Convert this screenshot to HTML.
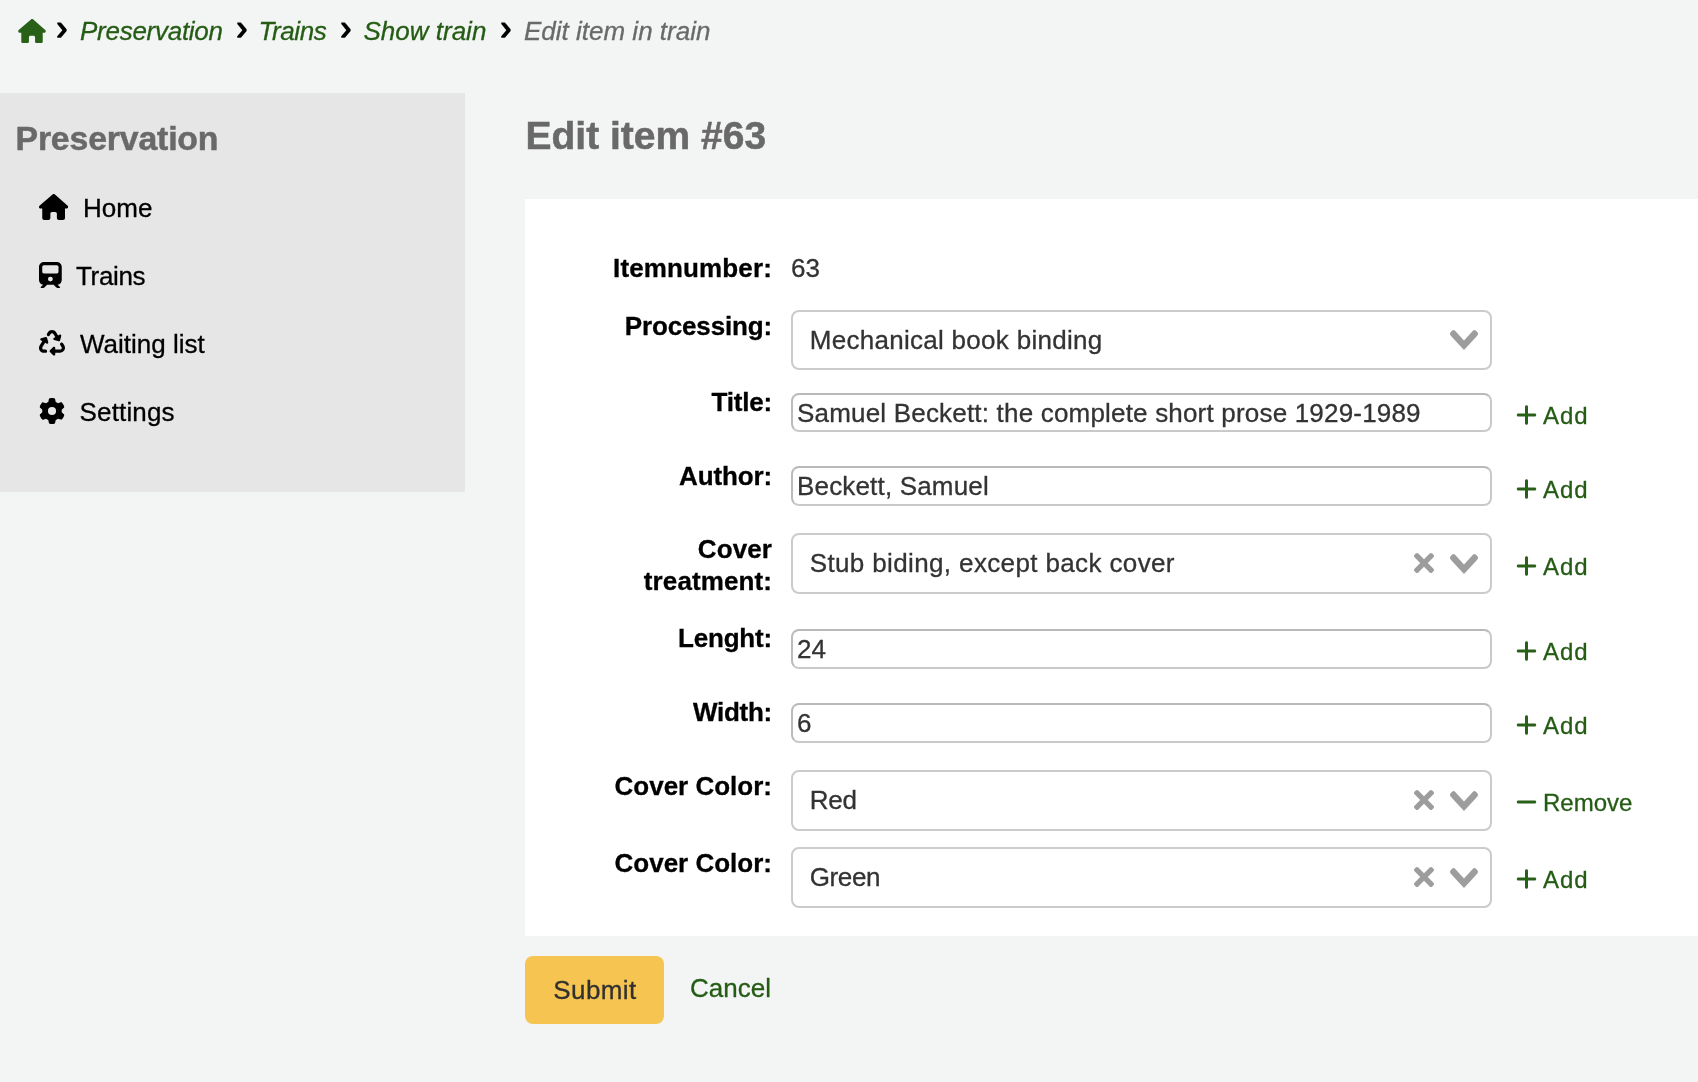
<!DOCTYPE html>
<html lang="en">
<head>
<meta charset="utf-8">
<title>Edit item in train › Preservation › Koha</title>
<style>
*{box-sizing:border-box;margin:0;padding:0}
html,body{width:1698px;height:1082px;overflow:hidden}
body{background:#f3f4f4;font-family:"Liberation Sans",sans-serif;font-size:26px;color:#000;position:relative;-webkit-text-stroke-width:.3px}
a{color:#245c14;text-decoration:none}
svg{display:block}
#page{position:absolute;left:0;top:0;width:1698px;height:1082px;will-change:transform}

/* breadcrumbs */
#breadcrumbs{position:absolute;left:0;top:0;width:1698px;height:64px}
#breadcrumbs ol{list-style:none;position:relative;height:64px}
#breadcrumbs li{position:absolute;top:15px;line-height:32px;font-size:26px;font-style:italic;white-space:nowrap;color:#696969}
#breadcrumbs li a{color:#245c14}
#breadcrumbs li+li::before{content:"\203a";position:absolute;left:var(--sx,-24px);top:-8px;font-style:normal;font-weight:normal;font-size:35px;line-height:40px;color:#000;-webkit-text-stroke:1.5px #000;transform:scaleX(.93)}
#breadcrumbs .homeicon{position:absolute;left:18px;top:18.5px;width:28px;height:24.5px}
#breadcrumbs .homeicon svg{width:28px;height:24.5px;fill:#286018}

/* sidebar */
#navmenu{position:absolute;left:0;top:93px;width:465px;height:399px;background:#e6e6e6}
#navmenu h5{-webkit-text-stroke-width:.5px;position:absolute;left:15.5px;top:117px;font-size:33.8px;letter-spacing:-.16px;line-height:40px;font-weight:bold;color:#696969;white-space:nowrap}
#navmenu ul{list-style:none}
#navmenu li{position:absolute;left:0;width:465px;height:68px}
#navmenu li a{color:#000;display:block;position:absolute;top:0;line-height:32px;font-size:26px;white-space:nowrap}
#navmenu li .ic{position:absolute;fill:#000}

/* main */
h2{position:absolute;left:525.5px;top:112.6px;-webkit-text-stroke-width:.5px;font-size:39px;line-height:46px;font-weight:bold;color:#696969;white-space:nowrap}
fieldset.rows{position:absolute;left:525px;top:199px;width:1173px;height:737px;background:#fff;border:0}
fieldset.rows ol{list-style:none}
fieldset.rows li{position:static}
fieldset.rows label{position:absolute;left:67px;width:180px;text-align:right;font-weight:bold;font-size:26px;line-height:32px;color:#000}
.txt{position:absolute;left:266px;width:701px;height:39px;border:2px solid;border-color:#b9b9b9 #c9c9c9 #c9c9c9 #bbb;border-radius:8px;background:#fff;font-size:26px;line-height:32px;color:#333;white-space:nowrap;overflow:hidden}
.txt span{position:absolute;left:4px;white-space:nowrap}
.vs{position:absolute;left:266px;width:701px;height:60px;border:2px solid #cbcbcb;border-radius:8px;background:#fff;font-size:26px;color:#333}
.vs .sel{position:absolute;left:16.7px;top:12.1px;line-height:32px;white-space:nowrap}
.vs .x{position:absolute;left:621px;top:19px;width:20px;height:20px;fill:rgba(60,60,60,.5)}
.vs .ch{position:absolute;left:657px;top:19px;width:28px;height:20px;fill:rgba(60,60,60,.5)}
.val{position:absolute;left:266px;font-size:26px;line-height:32px;color:#333}
.act{position:absolute;left:990.9px;font-size:24px;line-height:32px;color:#245c14;white-space:nowrap}
.act svg{position:absolute;left:0;top:3.2px;width:21px;height:24px;fill:#286018}
.act span{position:absolute;left:27.1px;top:0}
.act.rem svg{top:2.4px}

.action{position:absolute;left:525px;top:956px}
.action .btn{position:absolute;left:0;top:0;width:139px;height:68px;border:0;border-radius:8px;background:#f6c450;color:#303030;font-family:inherit;font-size:26px;line-height:68px;text-align:left;padding-left:28.3px;letter-spacing:.4px}
.action a{position:absolute;left:165px;top:16px;line-height:32px;font-size:26px}
</style>
</head>
<body>
<div id="page">

<nav id="breadcrumbs" aria-label="Breadcrumb">
<ol>
  <li style="left:0;top:0"><a href="#" class="homeicon" title="Home"><svg viewBox="0 0 576 512"><path d="M575.8 255.5c0 18-15 32.1-32 32.1h-32l.7 160.2c0 2.700-.2 5.400-.5 8.100V472c0 22.100-17.900 40-40 40H456c-1.100 0-2.200 0-3.300-.1c-1.400 .1-2.800 .1-4.200 .1H416 392c-22.100 0-40-17.900-40-40V448 384c0-17.700-14.300-32-32-32H256c-17.700 0-32 14.300-32 32v64 24c0 22.100-17.900 40-40 40H160 128.100c-1.500 0-3-.1-4.500-.2c-1.200 .1-2.400 .2-3.600 .2H104c-22.100 0-40-17.900-40-40V360c0-.9 0-1.900 .1-2.800V287.600H32c-18 0-32-14-32-32.100c0-9 3-17 10-24L266.400 8c7-7 15-8 22-8s15 2 21 7L564.800 231.500c8 7 12 15 11 24z"/></svg></a></li>
  <li style="left:80px;--sx:-24px"><a href="#" style="letter-spacing:-.27px">Preservation</a></li>
  <li style="left:258.5px;--sx:-22.5px"><a href="#" style="letter-spacing:-.4px">Trains</a></li>
  <li style="left:363.5px;--sx:-23.5px"><a href="#">Show train</a></li>
  <li style="left:524px;--sx:-24px">Edit item in train</li>
</ol>
</nav>

<aside id="navmenu">
  <h5 style="top:24.5px">Preservation</h5>
  <ul>
    <li style="top:81px">
      <svg class="ic" style="left:39px;top:20px;width:29.25px;height:26px" viewBox="0 0 576 512"><path d="M575.8 255.5c0 18-15 32.1-32 32.1h-32l.7 160.2c0 2.700-.2 5.400-.5 8.100V472c0 22.100-17.900 40-40 40H456c-1.100 0-2.200 0-3.300-.1c-1.400 .1-2.800 .1-4.200 .1H416 392c-22.100 0-40-17.900-40-40V448 384c0-17.700-14.300-32-32-32H256c-17.700 0-32 14.300-32 32v64 24c0 22.100-17.900 40-40 40H160 128.100c-1.500 0-3-.1-4.500-.2c-1.200 .1-2.400 .2-3.600 .2H104c-22.100 0-40-17.900-40-40V360c0-.9 0-1.900 .1-2.800V287.600H32c-18 0-32-14-32-32.100c0-9 3-17 10-24L266.400 8c7-7 15-8 22-8s15 2 21 7L564.800 231.500c8 7 12 15 11 24z"/></svg>
      <a href="#" style="left:83px;top:18px">Home</a>
    </li>
    <li style="top:149px">
      <svg class="ic" style="left:39px;top:20px;width:22.75px;height:26px" viewBox="0 0 448 512"><path d="M96 0C43 0 0 43 0 96V352c0 48 35.200 87.700 81.100 94.900l-46 46C28.100 499.900 33.100 512 43 512H82.700c8.500 0 16.600-3.400 22.600-9.400L160 448H288l54.600 54.600c6 6 14.100 9.400 22.600 9.400H405c10 0 15-12.100 7.900-19.100l-46-46c46-7.100 81.100-46.900 81.100-94.900V96c0-53-43-96-96-96H96zM64 96c0-17.700 14.300-32 32-32H352c17.700 0 32 14.300 32 32v96c0 17.700-14.300 32-32 32H96c-17.700 0-32-14.300-32-32V96zM224 288a48 48 0 1 1 0 96 48 48 0 1 1 0-96z"/></svg>
      <a href="#" style="left:76px;top:18px;letter-spacing:-.35px">Trains</a>
    </li>
    <li style="top:217px">
      <svg class="ic" style="left:39px;top:20px;width:26px;height:26px" viewBox="0 0 512 512"><path d="M174.700 45.100C192.200 17 223 0 256 0s63.800 17 81.300 45.100l38.600 61.700 27-15.600c8.400-4.900 18.900-4.200 26.600 1.700s11.100 15.900 8.600 25.300l-23.400 87.400c-3.400 12.800-16.600 20.400-29.400 17l-87.400-23.400c-9.400-2.500-16.300-10.400-17.600-20s3.400-19.100 11.800-23.900l28.400-16.400L283 79c-5.800-9.300-16-15-27-15s-21.200 5.700-27 15l-17.500 28c-9.200 14.800-28.600 19.500-43.600 10.500c-15.300-9.200-20.200-29.200-10.700-44.400l17.500-28zM429.500 251.900c15-9 34.400-4.300 43.600 10.500l24.400 39.100c9.400 15.100 14.400 32.400 14.600 50.200c.3 53.100-42.700 96.400-95.800 96.400L320 448v32c0 9.700-5.800 18.500-14.800 22.200s-19.300 1.700-26.200-5.200l-64-64c-9.400-9.400-9.400-24.600 0-33.900l64-64c6.900-6.900 17.200-8.900 26.200-5.200s14.800 12.500 14.800 22.200v32l96.200 0c17.600 0 31.900-14.400 31.800-32c0-5.900-1.700-11.700-4.800-16.700l-24.400-39.100c-9.500-15.200-4.700-35.200 10.700-44.400zm-364.600-31L36 204.200c-8.400-4.900-13.100-14.300-11.800-23.900s8.200-17.500 17.600-20l87.400-23.400c12.800-3.400 26 4.200 29.400 17L182 241.200c2.500 9.400-.9 19.300-8.600 25.300s-18.200 6.600-26.600 1.700l-26.500-15.300L68.800 335.300c-3.100 5-4.800 10.800-4.800 16.700c-.1 17.600 14.200 32 31.800 32l32.200 0c17.700 0 32 14.300 32 32s-14.300 32-32 32l-32.200 0C42.700 448-.3 404.800 0 351.600c.1-17.800 5.100-35.100 14.600-50.200l50.300-80.500z"/></svg>
      <a href="#" style="left:80px;top:18px">Waiting list</a>
    </li>
    <li style="top:285px">
      <svg class="ic" style="left:39px;top:20px;width:26px;height:26px" viewBox="0 0 512 512"><path d="M495.900 166.600c3.200 8.700 .5 18.400-6.400 24.600l-43.300 39.400c1.100 8.300 1.700 16.800 1.700 25.400s-.6 17.100-1.700 25.400l43.300 39.400c6.900 6.200 9.600 15.900 6.400 24.600c-4.400 11.900-9.700 23.300-15.800 34.300l-4.700 8.100c-6.600 11-14 21.400-22.100 31.200c-5.900 7.200-15.700 9.600-24.500 6.800l-55.700-17.700c-13.400 10.300-28.200 18.900-44 25.400l-12.500 57.100c-2 9.100-9 16.300-18.200 17.800c-13.800 2.300-28 3.500-42.500 3.500s-28.700-1.200-42.500-3.500c-9.200-1.500-16.200-8.700-18.200-17.800l-12.500-57.100c-15.800-6.500-30.600-15.100-44-25.400L83.100 425.900c-8.800 2.800-18.600 .3-24.500-6.800c-8.100-9.800-15.500-20.200-22.100-31.200l-4.700-8.100c-6.100-11-11.400-22.400-15.800-34.300c-3.200-8.700-.5-18.400 6.400-24.600l43.300-39.400C64.600 273.100 64 264.600 64 256s.6-17.100 1.700-25.400L22.400 191.200c-6.900-6.200-9.600-15.900-6.400-24.600c4.400-11.900 9.700-23.300 15.800-34.300l4.700-8.100c6.600-11 14-21.400 22.100-31.200c5.900-7.200 15.700-9.600 24.500-6.800l55.700 17.700c13.400-10.300 28.200-18.900 44-25.400l12.500-57.100c2-9.100 9-16.300 18.200-17.800C227.300 1.200 241.500 0 256 0s28.700 1.200 42.500 3.500c9.200 1.500 16.200 8.700 18.200 17.800l12.500 57.100c15.800 6.500 30.600 15.100 44 25.400l55.700-17.700c8.800-2.800 18.600-.3 24.500 6.800c8.100 9.800 15.500 20.200 22.100 31.200l4.700 8.100c6.100 11 11.400 22.400 15.800 34.300zM256 336a80 80 0 1 0 0-160 80 80 0 1 0 0 160z"/></svg>
      <a href="#" style="left:79.6px;top:18px;letter-spacing:.14px">Settings</a>
    </li>
  </ul>
</aside>

<main>
<h2>Edit item #63</h2>
<form>
<fieldset class="rows">
<ol>
  <li><label style="top:53.4px;letter-spacing:.13px">Itemnumber:</label><span class="val" style="top:53.4px;">63</span></li>
  <li><label style="top:111.4px;letter-spacing:-.15px">Processing:</label><div class="vs" style="top:111px;height:60px"><span class="sel" style="top:12.2px;letter-spacing:.29px">Mechanical book binding</span><svg class="ch" style="top:18.2px" viewBox="0 0 14 10"><path d="M9.211364 7.59931l4.48338-4.867229c.407008-.441854.407008-1.158247 0-1.60046l-.73712-.80023c-.407008-.441854-1.066904-.441854-1.474243 0L7 5.198617 2.51662.33139c-.407008-.441853-1.066904-.441853-1.474243 0l-.737121.80023c-.407008.441854-.407008 1.158248 0 1.600461l4.48338 4.867228L7 10l2.211364-2.40069z"/></svg></div></li>
  <li><label style="top:187.2px;letter-spacing:-.18px">Title:</label><div class="txt" style="top:194px;height:39px"><span style="top:2.4px;letter-spacing:.19px">Samuel Beckett: the complete short prose 1929-1989</span></div><a href="#" class="act" style="top:201px"><svg viewBox="0 0 448 512"><path d="M256 80c0-17.700-14.300-32-32-32s-32 14.300-32 32V224H48c-17.700 0-32 14.300-32 32s14.300 32 32 32H192V432c0 17.700 14.300 32 32 32s32-14.300 32-32V288H400c17.700 0 32-14.300 32-32s-14.300-32-32-32H256V80z"/></svg><span style="letter-spacing:1px;">Add</span></a></li>
  <li><label style="top:261.1px;letter-spacing:-.14px">Author:</label><div class="txt" style="top:267px;height:40px"><span style="top:2.3px;letter-spacing:.17px">Beckett, Samuel</span></div><a href="#" class="act" style="top:274.7px"><svg viewBox="0 0 448 512"><path d="M256 80c0-17.700-14.300-32-32-32s-32 14.300-32 32V224H48c-17.700 0-32 14.300-32 32s14.300 32 32 32H192V432c0 17.700 14.300 32 32 32s32-14.300 32-32V288H400c17.700 0 32-14.300 32-32s-14.300-32-32-32H256V80z"/></svg><span style="letter-spacing:1px;">Add</span></a></li>
  <li><label style="top:334.1px;letter-spacing:.1px">Cover treatment:</label><div class="vs" style="top:334px;height:61px"><span class="sel" style="top:11.6px;letter-spacing:.37px">Stub biding, except back cover</span><svg class="x" style="top:17.8px" viewBox="0 0 10 10"><path d="M6.895455 5l2.842897-2.842898c.348864-.348863.348864-.914488 0-1.263636L9.106534.261648c-.348864-.348864-.914489-.348864-1.263636 0L5 3.104545 2.157102.261648c-.348863-.348864-.914488-.348864-1.263636 0L.261648.893466c-.348864.348864-.348864.914489 0 1.263636L3.104545 5 .261648 7.842898c-.348864.348863-.348864.914488 0 1.263636l.631818.631818c.348864.348864.914773.348864 1.263636 0L5 6.895455l2.842898 2.842897c.348863.348864.914772.348864 1.263636 0l.631818-.631818c.348864-.348864.348864-.914489 0-1.263636L6.895455 5z"/></svg><svg class="ch" style="top:18.7px" viewBox="0 0 14 10"><path d="M9.211364 7.59931l4.48338-4.867229c.407008-.441854.407008-1.158247 0-1.60046l-.73712-.80023c-.407008-.441854-1.066904-.441854-1.474243 0L7 5.198617 2.51662.33139c-.407008-.441853-1.066904-.441853-1.474243 0l-.737121.80023c-.407008.441854-.407008 1.158248 0 1.600461l4.48338 4.867228L7 10l2.211364-2.40069z"/></svg></div><a href="#" class="act" style="top:352px"><svg viewBox="0 0 448 512"><path d="M256 80c0-17.700-14.300-32-32-32s-32 14.300-32 32V224H48c-17.700 0-32 14.300-32 32s14.300 32 32 32H192V432c0 17.700 14.300 32 32 32s32-14.300 32-32V288H400c17.700 0 32-14.300 32-32s-14.300-32-32-32H256V80z"/></svg><span style="letter-spacing:1px;">Add</span></a></li>
  <li><label style="top:423.4px;letter-spacing:-.19px">Lenght:</label><div class="txt" style="top:430px;height:40px"><span style="top:2.4px;">24</span></div><a href="#" class="act" style="top:436.9px"><svg viewBox="0 0 448 512"><path d="M256 80c0-17.700-14.300-32-32-32s-32 14.300-32 32V224H48c-17.700 0-32 14.300-32 32s14.300 32 32 32H192V432c0 17.700 14.300 32 32 32s32-14.300 32-32V288H400c17.700 0 32-14.300 32-32s-14.300-32-32-32H256V80z"/></svg><span style="letter-spacing:1px;">Add</span></a></li>
  <li><label style="top:497.1px;letter-spacing:-.25px">Width:</label><div class="txt" style="top:504px;height:40px"><span style="top:1.8px;">6</span></div><a href="#" class="act" style="top:510.6px"><svg viewBox="0 0 448 512"><path d="M256 80c0-17.700-14.300-32-32-32s-32 14.300-32 32V224H48c-17.700 0-32 14.300-32 32s14.300 32 32 32H192V432c0 17.700 14.300 32 32 32s32-14.300 32-32V288H400c17.700 0 32-14.300 32-32s-14.300-32-32-32H256V80z"/></svg><span style="letter-spacing:1px;">Add</span></a></li>
  <li><label style="top:570.9px;">Cover Color:</label><div class="vs" style="top:571px;height:61px"><span class="sel" style="top:12.4px;letter-spacing:-.2px">Red</span><svg class="x" style="top:17.8px" viewBox="0 0 10 10"><path d="M6.895455 5l2.842897-2.842898c.348864-.348863.348864-.914488 0-1.263636L9.106534.261648c-.348864-.348864-.914489-.348864-1.263636 0L5 3.104545 2.157102.261648c-.348863-.348864-.914488-.348864-1.263636 0L.261648.893466c-.348864.348864-.348864.914489 0 1.263636L3.104545 5 .261648 7.842898c-.348864.348863-.348864.914488 0 1.263636l.631818.631818c.348864.348864.914773.348864 1.263636 0L5 6.895455l2.842898 2.842897c.348863.348864.914772.348864 1.263636 0l.631818-.631818c.348864-.348864.348864-.914489 0-1.263636L6.895455 5z"/></svg><svg class="ch" style="top:18.7px" viewBox="0 0 14 10"><path d="M9.211364 7.59931l4.48338-4.867229c.407008-.441854.407008-1.158247 0-1.60046l-.73712-.80023c-.407008-.441854-1.066904-.441854-1.474243 0L7 5.198617 2.51662.33139c-.407008-.441853-1.066904-.441853-1.474243 0l-.737121.80023c-.407008.441854-.407008 1.158248 0 1.600461l4.48338 4.867228L7 10l2.211364-2.40069z"/></svg></div><a href="#" class="act rem" style="top:588.2px"><svg viewBox="0 0 448 512"><path d="M432 256c0 17.700-14.300 32-32 32L48 288c-17.700 0-32-14.300-32-32s14.300-32 32-32l352 0c17.700 0 32 14.300 32 32z"/></svg><span style="">Remove</span></a></li>
  <li><label style="top:648px;">Cover Color:</label><div class="vs" style="top:648px;height:61px"><span class="sel" style="top:12.4px;letter-spacing:-.35px">Green</span><svg class="x" style="top:17.8px" viewBox="0 0 10 10"><path d="M6.895455 5l2.842897-2.842898c.348864-.348863.348864-.914488 0-1.263636L9.106534.261648c-.348864-.348864-.914489-.348864-1.263636 0L5 3.104545 2.157102.261648c-.348863-.348864-.914488-.348864-1.263636 0L.261648.893466c-.348864.348864-.348864.914489 0 1.263636L3.104545 5 .261648 7.842898c-.348864.348863-.348864.914488 0 1.263636l.631818.631818c.348864.348864.914773.348864 1.263636 0L5 6.895455l2.842898 2.842897c.348863.348864.914772.348864 1.263636 0l.631818-.631818c.348864-.348864.348864-.914489 0-1.263636L6.895455 5z"/></svg><svg class="ch" style="top:18.7px" viewBox="0 0 14 10"><path d="M9.211364 7.59931l4.48338-4.867229c.407008-.441854.407008-1.158247 0-1.60046l-.73712-.80023c-.407008-.441854-1.066904-.441854-1.474243 0L7 5.198617 2.51662.33139c-.407008-.441853-1.066904-.441853-1.474243 0l-.737121.80023c-.407008.441854-.407008 1.158248 0 1.600461l4.48338 4.867228L7 10l2.211364-2.40069z"/></svg></div><a href="#" class="act" style="top:665.3px"><svg viewBox="0 0 448 512"><path d="M256 80c0-17.700-14.300-32-32-32s-32 14.300-32 32V224H48c-17.700 0-32 14.300-32 32s14.300 32 32 32H192V432c0 17.700 14.300 32 32 32s32-14.300 32-32V288H400c17.700 0 32-14.300 32-32s-14.300-32-32-32H256V80z"/></svg><span style="letter-spacing:1px;">Add</span></a></li>
</ol>
</fieldset>
<div class="action">
  <button type="button" class="btn">Submit</button>
  <a href="#">Cancel</a>
</div>
</form>
</main>

</div>
</body>
</html>
